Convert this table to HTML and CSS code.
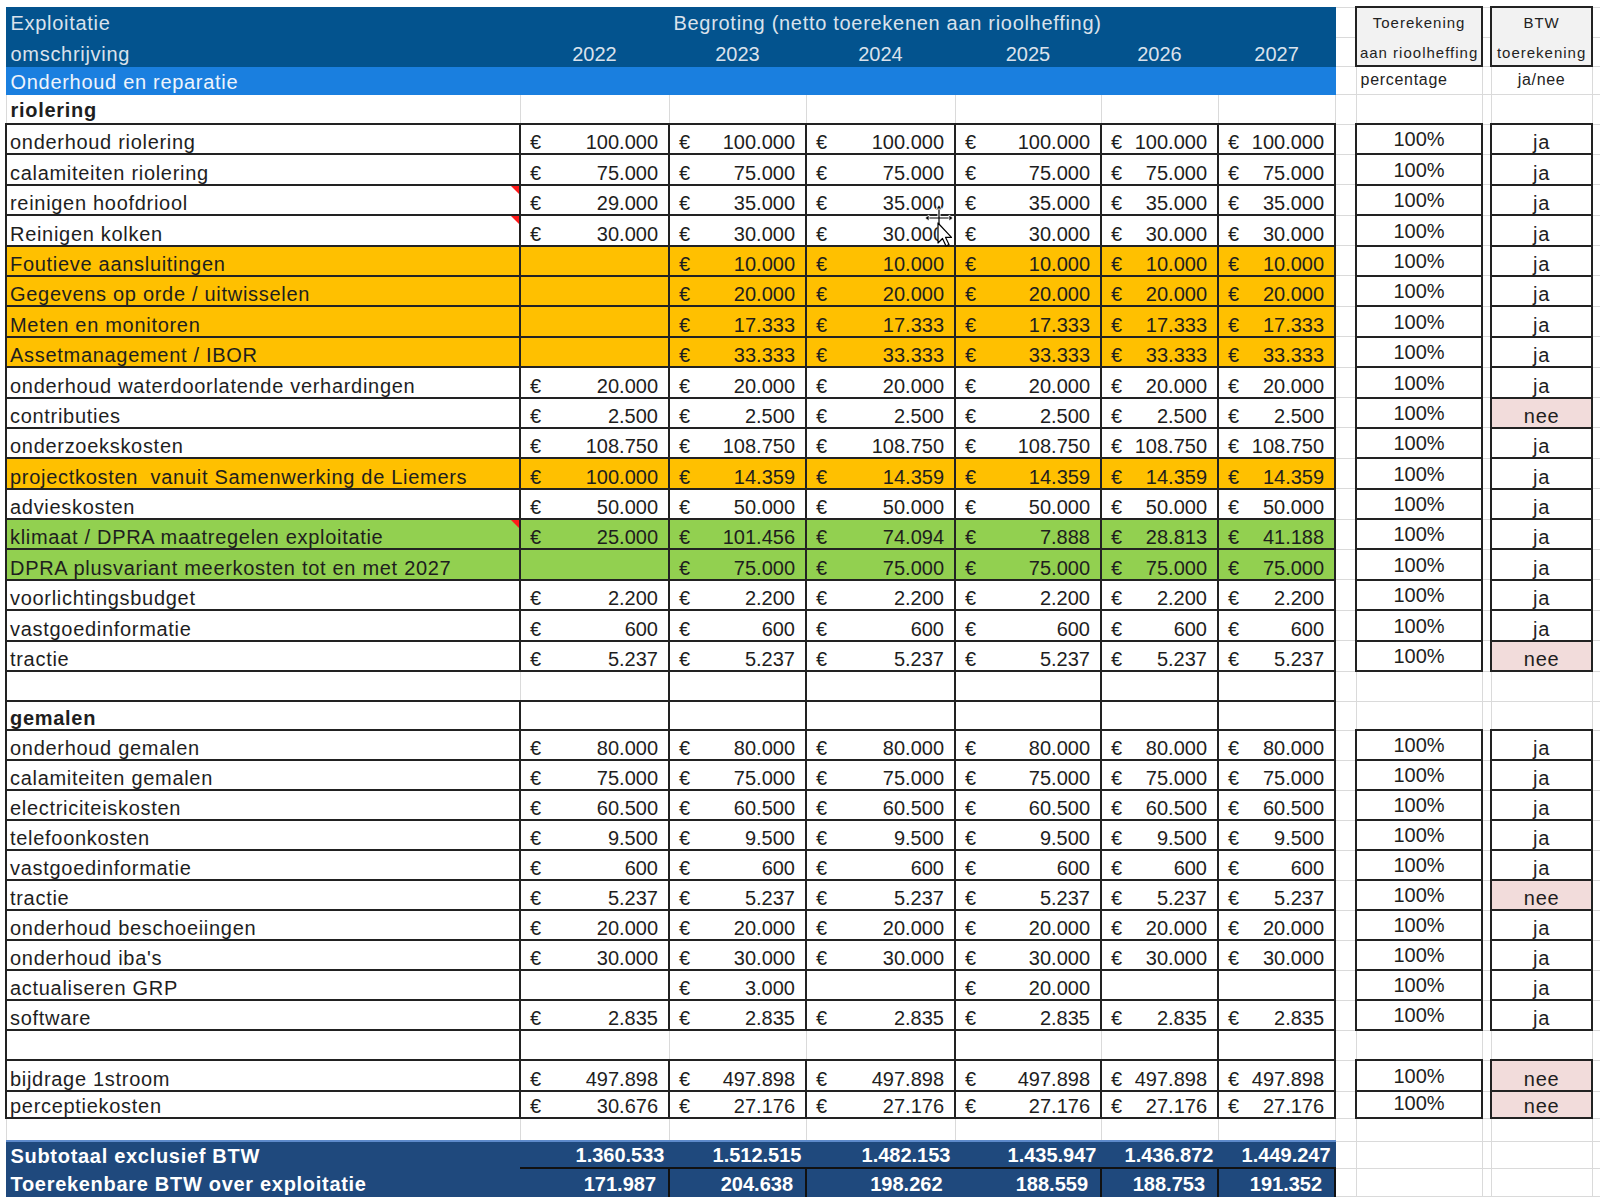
FILE: index.html
```html
<!DOCTYPE html>
<html lang="nl">
<head>
<meta charset="utf-8">
<title>Exploitatie</title>
<link rel="stylesheet" href="styles.css">
</head>
<body>
<div class="sheet">
<table class="grid">
<colgroup>
<col class="c-desc"><col class="c-y1"><col class="c-y2"><col class="c-y3"><col class="c-y4"><col class="c-y5"><col class="c-y6"><col class="c-g1"><col class="c-pct"><col class="c-g2"><col class="c-btw"><col class="c-g3">
</colgroup>
<tbody>
<tr class="h1">
<td class="hd">Exploitatie</td>
<td class="hd beg" colspan="6">Begroting (netto toerekenen aan rioolheffing)</td>
<td class="x"></td>
<td class="boxh" rowspan="2"><div class="t1">Toerekening</div><div class="t2">aan rioolheffing</div></td>
<td class="x"></td>
<td class="boxh" rowspan="2"><div class="t1">BTW</div><div class="t2">toerekening</div></td>
<td class="x"></td>
</tr>
<tr class="h2">
<td class="hd">omschrijving</td>
<td class="hd yr">2022</td><td class="hd yr">2023</td><td class="hd yr">2024</td><td class="hd yr">2025</td><td class="hd yr">2026</td><td class="hd yr">2027</td>
<td class="x"></td><td class="x"></td><td class="x"></td>
</tr>
<tr class="h3">
<td class="lb" colspan="7">Onderhoud en reparatie</td>
<td class="x"></td><td class="x sm">percentage</td><td class="x"></td><td class="x sm ctr">ja/nee</td><td class="x"></td>
</tr>
<tr class="sec">
<td class="x bold">riolering</td>
<td class="x"></td><td class="x"></td><td class="x"></td><td class="x"></td><td class="x"></td><td class="x"></td>
<td class="x"></td><td class="x"></td><td class="x"></td><td class="x"></td><td class="x"></td>
</tr>

<tr class="r"><td class="d">onderhoud riolering</td><td class="m"><span>€</span>100.000</td><td class="m"><span>€</span>100.000</td><td class="m"><span>€</span>100.000</td><td class="m"><span>€</span>100.000</td><td class="m"><span>€</span>100.000</td><td class="m"><span>€</span>100.000</td><td class="x"></td><td class="p">100%</td><td class="x"></td><td class="b">ja</td><td class="x"></td></tr>
<tr class="r"><td class="d">calamiteiten riolering</td><td class="m"><span>€</span>75.000</td><td class="m"><span>€</span>75.000</td><td class="m"><span>€</span>75.000</td><td class="m"><span>€</span>75.000</td><td class="m"><span>€</span>75.000</td><td class="m"><span>€</span>75.000</td><td class="x"></td><td class="p">100%</td><td class="x"></td><td class="b">ja</td><td class="x"></td></tr>
<tr class="r"><td class="d note">reinigen hoofdriool</td><td class="m"><span>€</span>29.000</td><td class="m"><span>€</span>35.000</td><td class="m"><span>€</span>35.000</td><td class="m"><span>€</span>35.000</td><td class="m"><span>€</span>35.000</td><td class="m"><span>€</span>35.000</td><td class="x"></td><td class="p">100%</td><td class="x"></td><td class="b">ja</td><td class="x"></td></tr>
<tr class="r"><td class="d note">Reinigen kolken</td><td class="m"><span>€</span>30.000</td><td class="m"><span>€</span>30.000</td><td class="m"><span>€</span>30.000</td><td class="m"><span>€</span>30.000</td><td class="m"><span>€</span>30.000</td><td class="m"><span>€</span>30.000</td><td class="x"></td><td class="p">100%</td><td class="x"></td><td class="b">ja</td><td class="x"></td></tr>
<tr class="r or"><td class="d">Foutieve aansluitingen</td><td class="m"></td><td class="m"><span>€</span>10.000</td><td class="m"><span>€</span>10.000</td><td class="m"><span>€</span>10.000</td><td class="m"><span>€</span>10.000</td><td class="m"><span>€</span>10.000</td><td class="x"></td><td class="p">100%</td><td class="x"></td><td class="b">ja</td><td class="x"></td></tr>
<tr class="r or"><td class="d">Gegevens op orde / uitwisselen</td><td class="m"></td><td class="m"><span>€</span>20.000</td><td class="m"><span>€</span>20.000</td><td class="m"><span>€</span>20.000</td><td class="m"><span>€</span>20.000</td><td class="m"><span>€</span>20.000</td><td class="x"></td><td class="p">100%</td><td class="x"></td><td class="b">ja</td><td class="x"></td></tr>
<tr class="r or"><td class="d">Meten en monitoren</td><td class="m"></td><td class="m"><span>€</span>17.333</td><td class="m"><span>€</span>17.333</td><td class="m"><span>€</span>17.333</td><td class="m"><span>€</span>17.333</td><td class="m"><span>€</span>17.333</td><td class="x"></td><td class="p">100%</td><td class="x"></td><td class="b">ja</td><td class="x"></td></tr>
<tr class="r or"><td class="d">Assetmanagement / IBOR</td><td class="m"></td><td class="m"><span>€</span>33.333</td><td class="m"><span>€</span>33.333</td><td class="m"><span>€</span>33.333</td><td class="m"><span>€</span>33.333</td><td class="m"><span>€</span>33.333</td><td class="x"></td><td class="p">100%</td><td class="x"></td><td class="b">ja</td><td class="x"></td></tr>
<tr class="r"><td class="d">onderhoud waterdoorlatende verhardingen</td><td class="m"><span>€</span>20.000</td><td class="m"><span>€</span>20.000</td><td class="m"><span>€</span>20.000</td><td class="m"><span>€</span>20.000</td><td class="m"><span>€</span>20.000</td><td class="m"><span>€</span>20.000</td><td class="x"></td><td class="p">100%</td><td class="x"></td><td class="b">ja</td><td class="x"></td></tr>
<tr class="r"><td class="d">contributies</td><td class="m"><span>€</span>2.500</td><td class="m"><span>€</span>2.500</td><td class="m"><span>€</span>2.500</td><td class="m"><span>€</span>2.500</td><td class="m"><span>€</span>2.500</td><td class="m"><span>€</span>2.500</td><td class="x"></td><td class="p">100%</td><td class="x"></td><td class="b nee">nee</td><td class="x"></td></tr>
<tr class="r"><td class="d">onderzoekskosten</td><td class="m"><span>€</span>108.750</td><td class="m"><span>€</span>108.750</td><td class="m"><span>€</span>108.750</td><td class="m"><span>€</span>108.750</td><td class="m"><span>€</span>108.750</td><td class="m"><span>€</span>108.750</td><td class="x"></td><td class="p">100%</td><td class="x"></td><td class="b">ja</td><td class="x"></td></tr>
<tr class="r or"><td class="d">projectkosten&nbsp; vanuit Samenwerking de Liemers</td><td class="m"><span>€</span>100.000</td><td class="m"><span>€</span>14.359</td><td class="m"><span>€</span>14.359</td><td class="m"><span>€</span>14.359</td><td class="m"><span>€</span>14.359</td><td class="m"><span>€</span>14.359</td><td class="x"></td><td class="p">100%</td><td class="x"></td><td class="b">ja</td><td class="x"></td></tr>
<tr class="r"><td class="d">advieskosten</td><td class="m"><span>€</span>50.000</td><td class="m"><span>€</span>50.000</td><td class="m"><span>€</span>50.000</td><td class="m"><span>€</span>50.000</td><td class="m"><span>€</span>50.000</td><td class="m"><span>€</span>50.000</td><td class="x"></td><td class="p">100%</td><td class="x"></td><td class="b">ja</td><td class="x"></td></tr>
<tr class="r gn"><td class="d note">klimaat / DPRA maatregelen exploitatie</td><td class="m"><span>€</span>25.000</td><td class="m"><span>€</span>101.456</td><td class="m"><span>€</span>74.094</td><td class="m"><span>€</span>7.888</td><td class="m"><span>€</span>28.813</td><td class="m"><span>€</span>41.188</td><td class="x"></td><td class="p">100%</td><td class="x"></td><td class="b">ja</td><td class="x"></td></tr>
<tr class="r gn"><td class="d">DPRA plusvariant meerkosten tot en met 2027</td><td class="m"></td><td class="m"><span>€</span>75.000</td><td class="m"><span>€</span>75.000</td><td class="m"><span>€</span>75.000</td><td class="m"><span>€</span>75.000</td><td class="m"><span>€</span>75.000</td><td class="x"></td><td class="p">100%</td><td class="x"></td><td class="b">ja</td><td class="x"></td></tr>
<tr class="r"><td class="d">voorlichtingsbudget</td><td class="m"><span>€</span>2.200</td><td class="m"><span>€</span>2.200</td><td class="m"><span>€</span>2.200</td><td class="m"><span>€</span>2.200</td><td class="m"><span>€</span>2.200</td><td class="m"><span>€</span>2.200</td><td class="x"></td><td class="p">100%</td><td class="x"></td><td class="b">ja</td><td class="x"></td></tr>
<tr class="r"><td class="d">vastgoedinformatie</td><td class="m"><span>€</span>600</td><td class="m"><span>€</span>600</td><td class="m"><span>€</span>600</td><td class="m"><span>€</span>600</td><td class="m"><span>€</span>600</td><td class="m"><span>€</span>600</td><td class="x"></td><td class="p">100%</td><td class="x"></td><td class="b">ja</td><td class="x"></td></tr>
<tr class="r"><td class="d">tractie</td><td class="m"><span>€</span>5.237</td><td class="m"><span>€</span>5.237</td><td class="m"><span>€</span>5.237</td><td class="m"><span>€</span>5.237</td><td class="m"><span>€</span>5.237</td><td class="m"><span>€</span>5.237</td><td class="x"></td><td class="p">100%</td><td class="x"></td><td class="b nee">nee</td><td class="x"></td></tr>

<tr class="e1"><td class="d gr"></td><td class="k gl"></td><td class="k"></td><td class="k"></td><td class="k"></td><td class="k"></td><td class="k"></td><td class="x"></td><td class="x"></td><td class="x"></td><td class="x"></td><td class="x"></td></tr>
<tr class="gh"><td class="d bold">gemalen</td><td class="k"></td><td class="k"></td><td class="k"></td><td class="k"></td><td class="k"></td><td class="k"></td><td class="x"></td><td class="x"></td><td class="x"></td><td class="x"></td><td class="x"></td></tr>

<tr class="g"><td class="d">onderhoud gemalen</td><td class="m"><span>€</span>80.000</td><td class="m"><span>€</span>80.000</td><td class="m"><span>€</span>80.000</td><td class="m"><span>€</span>80.000</td><td class="m"><span>€</span>80.000</td><td class="m"><span>€</span>80.000</td><td class="x"></td><td class="p">100%</td><td class="x"></td><td class="b">ja</td><td class="x"></td></tr>
<tr class="g"><td class="d">calamiteiten gemalen</td><td class="m"><span>€</span>75.000</td><td class="m"><span>€</span>75.000</td><td class="m"><span>€</span>75.000</td><td class="m"><span>€</span>75.000</td><td class="m"><span>€</span>75.000</td><td class="m"><span>€</span>75.000</td><td class="x"></td><td class="p">100%</td><td class="x"></td><td class="b">ja</td><td class="x"></td></tr>
<tr class="g"><td class="d">electriciteiskosten</td><td class="m"><span>€</span>60.500</td><td class="m"><span>€</span>60.500</td><td class="m"><span>€</span>60.500</td><td class="m"><span>€</span>60.500</td><td class="m"><span>€</span>60.500</td><td class="m"><span>€</span>60.500</td><td class="x"></td><td class="p">100%</td><td class="x"></td><td class="b">ja</td><td class="x"></td></tr>
<tr class="g"><td class="d">telefoonkosten</td><td class="m"><span>€</span>9.500</td><td class="m"><span>€</span>9.500</td><td class="m"><span>€</span>9.500</td><td class="m"><span>€</span>9.500</td><td class="m"><span>€</span>9.500</td><td class="m"><span>€</span>9.500</td><td class="x"></td><td class="p">100%</td><td class="x"></td><td class="b">ja</td><td class="x"></td></tr>
<tr class="g"><td class="d">vastgoedinformatie</td><td class="m"><span>€</span>600</td><td class="m"><span>€</span>600</td><td class="m"><span>€</span>600</td><td class="m"><span>€</span>600</td><td class="m"><span>€</span>600</td><td class="m"><span>€</span>600</td><td class="x"></td><td class="p">100%</td><td class="x"></td><td class="b">ja</td><td class="x"></td></tr>
<tr class="g"><td class="d">tractie</td><td class="m"><span>€</span>5.237</td><td class="m"><span>€</span>5.237</td><td class="m"><span>€</span>5.237</td><td class="m"><span>€</span>5.237</td><td class="m"><span>€</span>5.237</td><td class="m"><span>€</span>5.237</td><td class="x"></td><td class="p">100%</td><td class="x"></td><td class="b nee">nee</td><td class="x"></td></tr>
<tr class="g"><td class="d">onderhoud beschoeiingen</td><td class="m"><span>€</span>20.000</td><td class="m"><span>€</span>20.000</td><td class="m"><span>€</span>20.000</td><td class="m"><span>€</span>20.000</td><td class="m"><span>€</span>20.000</td><td class="m"><span>€</span>20.000</td><td class="x"></td><td class="p">100%</td><td class="x"></td><td class="b">ja</td><td class="x"></td></tr>
<tr class="g"><td class="d">onderhoud iba's</td><td class="m"><span>€</span>30.000</td><td class="m"><span>€</span>30.000</td><td class="m"><span>€</span>30.000</td><td class="m"><span>€</span>30.000</td><td class="m"><span>€</span>30.000</td><td class="m"><span>€</span>30.000</td><td class="x"></td><td class="p">100%</td><td class="x"></td><td class="b">ja</td><td class="x"></td></tr>
<tr class="g"><td class="d">actualiseren GRP</td><td class="m"></td><td class="m"><span>€</span>3.000</td><td class="m"></td><td class="m"><span>€</span>20.000</td><td class="m"></td><td class="m"></td><td class="x"></td><td class="p">100%</td><td class="x"></td><td class="b">ja</td><td class="x"></td></tr>
<tr class="g"><td class="d">software</td><td class="m"><span>€</span>2.835</td><td class="m"><span>€</span>2.835</td><td class="m"><span>€</span>2.835</td><td class="m"><span>€</span>2.835</td><td class="m"><span>€</span>2.835</td><td class="m"><span>€</span>2.835</td><td class="x"></td><td class="p">100%</td><td class="x"></td><td class="b">ja</td><td class="x"></td></tr>

<tr class="g"><td class="d"></td><td class="k gr"></td><td class="k gl gr"></td><td class="k gl"></td><td class="k gr"></td><td class="k gl"></td><td class="k"></td><td class="x"></td><td class="x"></td><td class="x"></td><td class="x"></td><td class="x"></td></tr>

<tr class="bj"><td class="d">bijdrage 1stroom</td><td class="m"><span>€</span>497.898</td><td class="m"><span>€</span>497.898</td><td class="m"><span>€</span>497.898</td><td class="m"><span>€</span>497.898</td><td class="m"><span>€</span>497.898</td><td class="m"><span>€</span>497.898</td><td class="x"></td><td class="p">100%</td><td class="x"></td><td class="b nee">nee</td><td class="x"></td></tr>
<tr class="pc"><td class="d">perceptiekosten</td><td class="m"><span>€</span>30.676</td><td class="m"><span>€</span>27.176</td><td class="m"><span>€</span>27.176</td><td class="m"><span>€</span>27.176</td><td class="m"><span>€</span>27.176</td><td class="m"><span>€</span>27.176</td><td class="x"></td><td class="p">100%</td><td class="x"></td><td class="b nee">nee</td><td class="x"></td></tr>

<tr class="sp"><td class="x"></td><td class="x"></td><td class="x"></td><td class="x"></td><td class="x"></td><td class="x"></td><td class="x"></td><td class="x"></td><td class="x"></td><td class="x"></td><td class="x"></td><td class="x"></td></tr>

<tr class="s1"><td class="st lbl">Subtotaal exclusief BTW</td><td class="st v1">1.360.533</td><td class="st v1">1.512.515</td><td class="st v1">1.482.153</td><td class="st v1">1.435.947</td><td class="st v1">1.436.872</td><td class="st v1">1.449.247</td><td class="x"></td><td class="x"></td><td class="x"></td><td class="x"></td><td class="x"></td></tr>
<tr class="s2"><td class="st lbl">Toerekenbare BTW over exploitatie</td><td class="st v2 sk br">171.987</td><td class="st v2 sk br">204.638</td><td class="st v2 sk">198.262</td><td class="st v2 sk br">188.559</td><td class="st v2 sk br">188.753</td><td class="st v2 sk br">191.352</td><td class="x"></td><td class="x"></td><td class="x"></td><td class="x"></td><td class="x"></td></tr>
</tbody>
</table>

<svg class="cursor" width="34" height="48" viewBox="0 0 34 48" aria-hidden="true">
  <g stroke="#fff" stroke-width="3" fill="none" stroke-linecap="round">
    <path d="M3 15 H27 M15 4 V26"/>
  </g>
  <g stroke="#000" stroke-width="1.2" fill="none">
    <path d="M3 15 H27 M15 4 V26"/>
  </g>
  <g fill="#000" stroke="#fff" stroke-width="0.8">
    <path d="M1 15 L5 12 V18 Z"/>
    <path d="M29 15 L25 12 V18 Z"/>
    <path d="M15 2 L12 6 H18 Z"/>
  </g>
  <path d="M14 20 V40 L18.5 35.5 L22 43 L25 41.6 L21.6 34.4 L27.5 34.4 Z" fill="#fff" stroke="#000" stroke-width="1.2" stroke-linejoin="round"/>
</svg>
</div>
</body>
</html>
```

FILE: styles.css
```css
* { box-sizing: border-box; }
html, body { margin: 0; padding: 0; background: #fff; }
body {
  font-family: "Liberation Sans", Arial, sans-serif;
  color: #1e1e1e;
}
.sheet {
  position: relative;
  padding: 6px 0 0 5px;
}
.grid {
  border-collapse: collapse;
  table-layout: fixed;
  width: 1595px;
}
.c-desc { width: 514px; }
.c-y1 { width: 149px; }
.c-y2 { width: 137px; }
.c-y3 { width: 149px; }
.c-y4 { width: 146px; }
.c-y5 { width: 117px; }
.c-y6 { width: 117px; }
.c-g1 { width: 21px; }
.c-pct { width: 126px; }
.c-g2 { width: 9px; }
.c-btw { width: 101px; }
.c-g3 { width: 9px; }

td {
  padding: 0;
  font-size: 20px;
  line-height: 22px;
  vertical-align: bottom;
  white-space: nowrap;
  overflow: hidden;
  border: 1px solid #dadada;
  letter-spacing: 0.7px;
}

/* row heights */
.h1 { height: 30px; }
.h2 { height: 29px; }
.h3 { height: 28px; }
.sec { height: 30px; }
.r { height: 30.4px; }
.e1 { height: 30px; }
.gh { height: 29px; }
.g { height: 30px; }
.bj { height: 31px; }
.pc { height: 26px; }
.sp { height: 23px; }
.s1 { height: 27px; }
.s2 { height: 28px; }

/* header */
.hd {
  background: #03538e;
  color: #dae2ec;
  border: 1px solid #03538e;
  padding-left: 4px;
}
.h1 .hd { padding-bottom: 3px; }
.h2 .hd { padding-bottom: 1px; }
.hd.beg { padding-left: 153px; }
.hd.yr { text-align: center; padding-left: 0; letter-spacing: 0; }
.lb {
  background: #1a7fdf;
  color: #eef4fc;
  border: 1px solid #1a7fdf;
  padding: 0 0 1px 4px;
}
.boxh {
  border: 2px solid #222;
  background: #f2f2f2;
  text-align: center;
  vertical-align: top;
  font-size: 15px;
  letter-spacing: 1px;
  color: #222;
}
.boxh .t1 { height: 29px; padding-top: 5px; line-height: 20px; }
.boxh .t2 { height: 28px; padding-top: 6px; line-height: 20px; }
.sm { font-size: 16px; padding: 0 0 3px 4px; color: #222; }
.ctr { text-align: center; padding-left: 0; }

.bold { font-weight: bold; padding-left: 4px; }
.x.bold { padding-bottom: 2px; }

/* data */
.d {
  border: 2px solid #222;
  padding-left: 3px;
  position: relative;
}
.m {
  border: 2px solid #222;
  text-align: right;
  padding: 0 10px 0 9px;
  letter-spacing: 0;
}
.m span { float: left; }
.p {
  border: 2px solid #222;
  text-align: center;
  padding-bottom: 3px;
  letter-spacing: 0;
}
.b {
  border: 2px solid #222;
  text-align: center;
}
.nee { background: #f2dcdb; }
.or .d, .or .m { background: #ffc000; }
.gn .d, .gn .m { background: #92d050; }

.k { border: 2px solid #222; }
.gl { border-left: 1px solid #dadada; }
.gr { border-right: 1px solid #dadada; }

.note::after {
  content: "";
  position: absolute;
  top: 0;
  right: 0;
  border-top: 8px solid #ff1a1a;
  border-left: 8px solid transparent;
}

/* totals */
.st {
  background: #1f497d;
  color: #fff;
  font-weight: bold;
  border: 1px solid #1f497d;
  letter-spacing: 0;
}
.s1 .st { border-top: 2px solid #5d8acb; }
.st.lbl { padding: 0 0 1px 4px; letter-spacing: 0.7px; }
.st.v1 { text-align: right; padding: 0 4px 1px 0; }
.st.v2 { text-align: right; padding: 0 12px 1px 0; }
.st.sk { border-top: 2px solid #111; }
.st.br { border-right: 2px solid #111; }

.cursor {
  position: absolute;
  left: 924px;
  top: 203px;
}
```
